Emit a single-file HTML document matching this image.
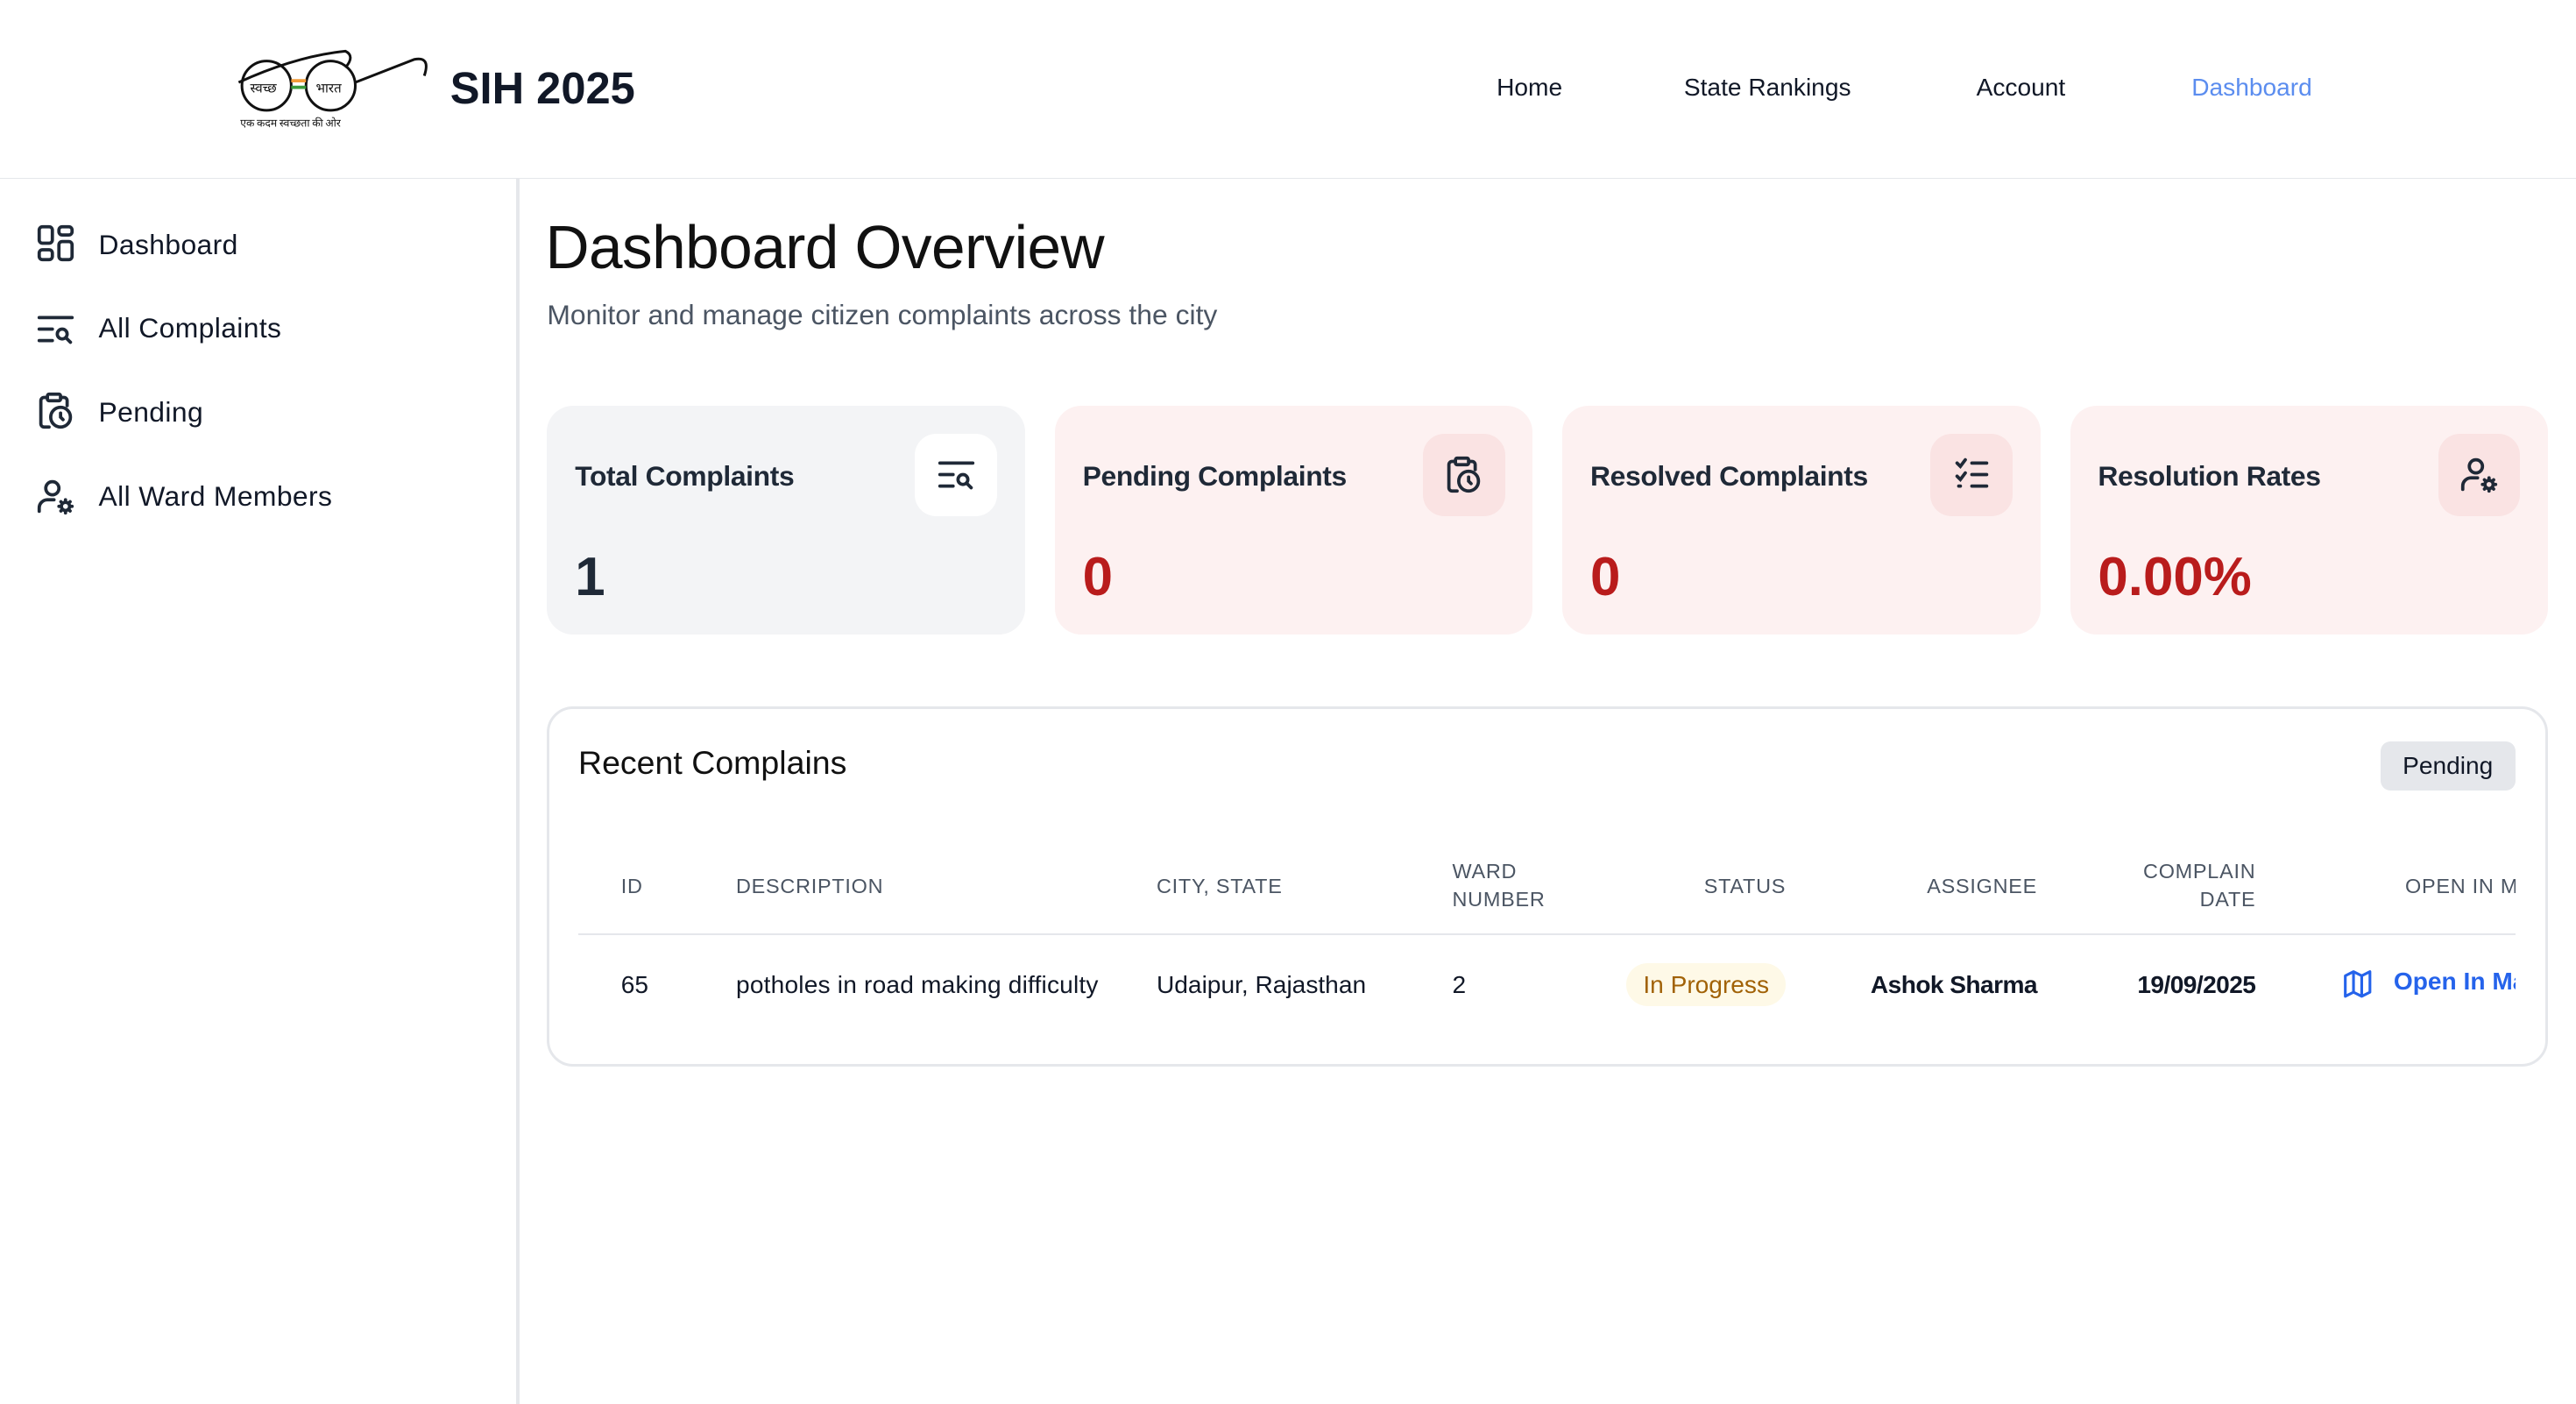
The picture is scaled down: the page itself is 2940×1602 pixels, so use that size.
<!DOCTYPE html>
<html><head><meta charset="utf-8"><style>
*{margin:0;padding:0;box-sizing:border-box}
html,body{width:2940px;height:1602px;overflow:hidden;background:#fff}
#r{zoom:1.875;width:1568px;height:855px;position:relative;font-family:"Liberation Sans","Noto Sans CJK SC",sans-serif;color:#111827}
.a{position:absolute;white-space:nowrap}
.nav{top:45px;font-size:15px;font-weight:500}
.side{left:60px;font-size:17px;font-weight:500;color:#111827;letter-spacing:.2px}
.si{left:22px;width:24px;height:24px}
.card{position:absolute;top:247px;width:291px;height:139px;border-radius:16px;background:#fdf1f1}
.card .t{position:absolute;left:17px;top:33px;font-size:17px;font-weight:700;color:#1f2937;letter-spacing:-.2px}
.card .v{position:absolute;left:17px;top:85px;font-size:33px;font-weight:700;color:#b91c1c}
.card .ib{position:absolute;left:224px;top:17px;width:50px;height:50px;border-radius:13px;background:#fae3e3;display:flex;align-items:center;justify-content:center}
.th{top:531px;font-size:12.5px;color:#4b5563;letter-spacing:.4px;line-height:17px}
.td{top:591px;font-size:15px;color:#111827}
</style></head><body><div id="r">
<div class="a" style="left:0;top:108px;width:1568px;height:1px;background:#e5e7eb"></div>
<svg class="a" style="left:140px;top:26px" width="125" height="56" viewBox="0 0 125 56">
<circle cx="22" cy="26" r="15" fill="none" stroke="#111" stroke-width="1.6"/>
<circle cx="61" cy="26" r="15" fill="none" stroke="#111" stroke-width="1.6"/>
<path d="M5 24 Q40 8 70 5 Q76 8 70 15 M76 24 L112 10 Q122 8 118 20" fill="none" stroke="#111" stroke-width="1.6"/>
<rect x="37" y="22" width="9" height="2" fill="#f29b38"/><rect x="37" y="26" width="9" height="2" fill="#3a9a3a"/>
<text x="12" y="30" font-size="8" fill="#111" font-family="Noto Sans CJK SC,sans-serif">स्वच्छ</text>
<text x="52" y="30" font-size="8" fill="#111" font-family="Noto Sans CJK SC,sans-serif">भारत</text>
<text x="6" y="51" font-size="6.5" fill="#111" font-family="Noto Sans CJK SC,sans-serif">एक कदम स्वच्छता की ओर</text>
</svg>
<div class="a" style="left:274px;top:38px;font-size:27px;font-weight:700">SIH 2025</div>
<div class="a nav" style="left:911px">Home</div>
<div class="a nav" style="left:1025px">State Rankings</div>
<div class="a nav" style="left:1203px">Account</div>
<div class="a nav" style="left:1334px;color:#5b8def">Dashboard</div>
<div class="a" style="left:314px;top:109px;width:2px;height:746px;background:#e5e7eb"></div>
<svg class="a si" style="top:136px" viewBox="0 0 24 24" fill="none" stroke="#1f2937" stroke-width="2" stroke-linejoin="round"><rect x="2" y="2" width="8" height="10" rx="2"/><rect x="14" y="2" width="8" height="5" rx="2"/><rect x="2" y="16" width="8" height="6" rx="2"/><rect x="14" y="11" width="8" height="11" rx="2"/></svg>
<div class="a side" style="top:139px">Dashboard</div>
<svg class="a si" style="top:188px" viewBox="0 0 24 24" fill="none" stroke="#1f2937" stroke-width="2" stroke-linecap="round"><path d="M2 5h20M2 12h8M2 19h8"/><circle cx="16" cy="15" r="3"/><path d="M18.5 17.5L21 20"/></svg>
<div class="a side" style="top:190px">All Complaints</div>
<svg class="a si" style="top:238px" viewBox="0 0 24 24" fill="none" stroke="#1f2937" stroke-width="2" stroke-linecap="round"><rect x="7" y="2" width="8" height="4" rx="1"/><path d="M7 4H5a2 2 0 0 0-2 2v14a2 2 0 0 0 2 2h3M15 4h2a2 2 0 0 1 2 2v3"/><circle cx="15" cy="16" r="6"/><path d="M15 13.5V16l1.5 1.5"/></svg>
<div class="a side" style="top:241px">Pending</div>
<svg class="a si" style="top:290px" viewBox="0 0 24 24" fill="none" stroke="#1f2937" stroke-width="2" stroke-linecap="round"><circle cx="10" cy="7" r="4"/><path d="M2 21v-2a5 5 0 0 1 5-5h4"/><circle cx="18" cy="18" r="2.5"/><path d="M18 14v1M18 21v1M14 18h1M21 18h1M15.2 15.2l.7.7M20.1 20.1l.7.7M15.2 20.8l.7-.7M20.1 15.9l.7-.7"/></svg>
<div class="a side" style="top:292px">All Ward Members</div>
<div class="a" style="left:332px;top:129px;font-size:37px;font-weight:400;color:#111;letter-spacing:-.3px">Dashboard Overview</div>
<div class="a" style="left:333px;top:182px;font-size:17px;color:#4b5563">Monitor and manage citizen complaints across the city</div>
<div class="card" style="left:333px;background:#f3f4f6"><div class="t">Total Complaints</div><div class="v" style="color:#1f2937">1</div><div class="ib" style="background:#fff"><svg width="24" height="24" viewBox="0 0 24 24" fill="none" stroke="#1f2937" stroke-width="2" stroke-linecap="round"><path d="M2 5h20M2 12h8M2 19h8"/><circle cx="16" cy="15" r="3"/><path d="M18.5 17.5L21 20"/></svg></div></div>
<div class="card" style="left:642px"><div class="t">Pending Complaints</div><div class="v">0</div><div class="ib"><svg width="24" height="24" viewBox="0 0 24 24" fill="none" stroke="#1f2937" stroke-width="2" stroke-linecap="round"><rect x="7" y="2" width="8" height="4" rx="1"/><path d="M7 4H5a2 2 0 0 0-2 2v14a2 2 0 0 0 2 2h3M15 4h2a2 2 0 0 1 2 2v3"/><circle cx="15" cy="16" r="6"/><path d="M15 13.5V16l1.5 1.5"/></svg></div></div>
<div class="card" style="left:951px"><div class="t">Resolved Complaints</div><div class="v">0</div><div class="ib"><svg width="24" height="24" viewBox="0 0 24 24" fill="none" stroke="#1f2937" stroke-width="2" stroke-linecap="round"><path d="M3 5l2 2 3-4M3 13l2 2 3-4M12 5h9M12 12h9M4 19h1M12 19h9"/></svg></div></div>
<div class="card" style="left:1260px"><div class="t">Resolution Rates</div><div class="v">0.00%</div><div class="ib"><svg width="24" height="24" viewBox="0 0 24 24" fill="none" stroke="#1f2937" stroke-width="2" stroke-linecap="round"><circle cx="10" cy="7" r="4"/><path d="M2 21v-2a5 5 0 0 1 5-5h4"/><circle cx="18" cy="18" r="2.5"/><path d="M18 14v1M18 21v1M14 18h1M21 18h1M15.2 15.2l.7.7M20.1 20.1l.7.7M15.2 20.8l.7-.7M20.1 15.9l.7-.7"/></svg></div></div>
<div class="a" style="left:333px;top:430px;width:1218px;height:219px;border:2px solid #e5e7eb;border-radius:16px;overflow:hidden">
</div>
<div class="a" style="left:352px;top:453px;font-size:20px;color:#111">Recent Complains</div>
<div class="a" style="left:1449px;top:451px;width:82px;height:30px;background:#e5e7eb;border-radius:6px;font-size:15px;font-weight:500;text-align:center;line-height:30px">Pending</div>
<div class="a th" style="left:378px">ID</div>
<div class="a th" style="left:448px">DESCRIPTION</div>
<div class="a th" style="left:704px">CITY, STATE</div>
<div class="a th" style="left:884px;top:522px">WARD<br>NUMBER</div>
<div class="a th" style="left:987px;width:100px;text-align:right">STATUS</div>
<div class="a th" style="left:1140px;width:100px;text-align:right">ASSIGNEE</div>
<div class="a th" style="left:1273px;top:522px;width:100px;text-align:right">COMPLAIN<br>DATE</div>
<div class="a" style="left:1380px;top:521px;width:151px;height:40px;overflow:hidden"><div class="a th" style="left:84px;top:10px">OPEN IN MAP</div></div>
<div class="a" style="left:352px;top:568px;width:1179px;height:1px;background:#e5e7eb"></div>
<div class="a td" style="left:378px">65</div>
<div class="a td" style="left:448px;letter-spacing:.1px">potholes in road making difficulty</div>
<div class="a td" style="left:704px">Udaipur, Rajasthan</div>
<div class="a td" style="left:884px">2</div>
<div class="a" style="left:990px;top:586px;width:97px;height:26px;border-radius:13px;background:#fef9e7;color:#a16207;font-size:15px;font-weight:500;text-align:center;line-height:27px">In Progress</div>
<div class="a td" style="left:1100px;width:140px;text-align:right;font-weight:700;letter-spacing:-.3px">Ashok Sharma</div>
<div class="a td" style="left:1273px;width:100px;text-align:right;font-weight:700;letter-spacing:-.3px">19/09/2025</div>
<div class="a" style="left:1380px;top:585px;width:151px;height:28px;overflow:hidden">
<svg class="a" style="left:45px;top:4px" width="20" height="20" viewBox="0 0 24 24" fill="none" stroke="#2563eb" stroke-width="2" stroke-linejoin="round"><path d="M3 6l6-3 6 3 6-3v15l-6 3-6-3-6 3z M9 3v15M15 6v15"/></svg>
<div class="a" style="left:77px;top:4px;font-size:15px;font-weight:600;color:#2563eb">Open In Map</div></div>
</div></body></html>
